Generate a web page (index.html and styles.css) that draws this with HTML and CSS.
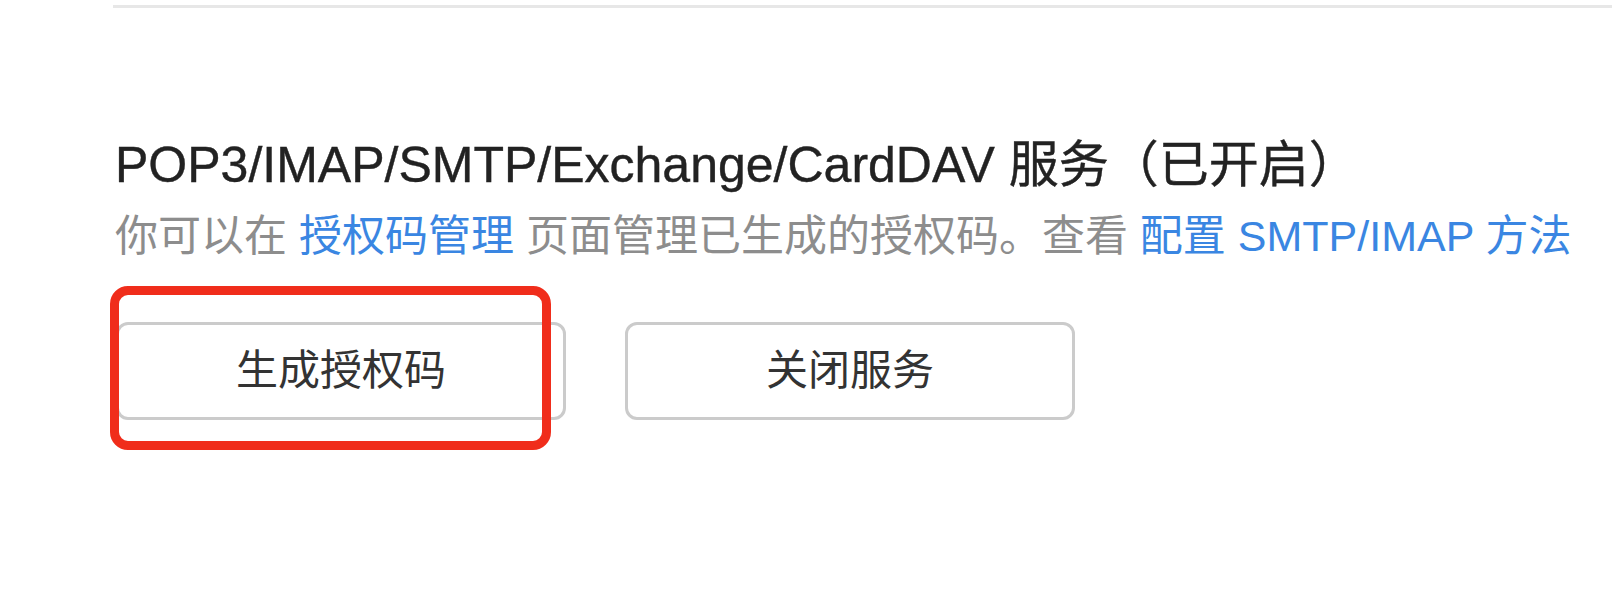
FILE: index.html
```html
<!DOCTYPE html>
<html lang="zh-CN">
<head>
<meta charset="utf-8">
<title>POP3/IMAP/SMTP 服务</title>
<link rel="stylesheet" href="styles.css">
</head>
<body>
<div class="page">
  <div class="rule"></div>
  <section class="service">
    <h2 class="title">POP3/IMAP/SMTP/Exchange/CardDAV 服务（已开启）</h2>
    <p class="desc">你可以在 <a class="link" href="#">授权码管理</a> 页面管理已生成的授权码。查看 <a class="link" href="#">配置 SMTP/IMAP 方法</a></p>
    <div class="actions">
      <div class="btn-wrap">
        <button class="btn">生成授权码</button>
        <div class="highlight"></div>
      </div>
      <button class="btn">关闭服务</button>
    </div>
  </section>
</div>
</body>
</html>
```
FILE: styles.css
```css
html, body {
  margin: 0;
  padding: 0;
  background: #ffffff;
}
body {
  font-family: "Liberation Sans", "Noto Sans CJK SC", sans-serif;
  width: 1612px;
  height: 600px;
  overflow: hidden;
}
.page {
  padding-top: 5px;
}
.rule {
  height: 3px;
  margin-left: 113px;
  background: #e7e7e7;
}
.service {
  padding-left: 115px;
}
.title {
  margin: 128px 0 0 0;
  font-size: 50px;
  line-height: 58px;
  font-weight: normal;
  color: #222222;
  -webkit-text-stroke: 0.4px #222222;
}
.desc {
  margin: 14px 0 0 0;
  font-size: 43px;
  line-height: 56px;
  color: #8d8d8d;
}
.link {
  color: #3a86e2;
  text-decoration: none;
}
.actions {
  display: flex;
  gap: 59px;
  margin-top: 58px;
  margin-left: 1px;
}
.btn-wrap {
  position: relative;
}
.btn {
  box-sizing: border-box;
  width: 450px;
  height: 98px;
  border: 3px solid #cbcbcb;
  border-radius: 12px;
  background: #ffffff;
  font-family: "Liberation Sans", "Noto Sans CJK SC", sans-serif;
  font-size: 42px;
  color: #333333;
  padding: 0 0 10px 0;
}
.highlight {
  position: absolute;
  box-sizing: border-box;
  left: -6px;
  top: -36px;
  width: 441px;
  height: 164px;
  border: 9px solid #f02d1b;
  border-radius: 18px;
  pointer-events: none;
}
```
